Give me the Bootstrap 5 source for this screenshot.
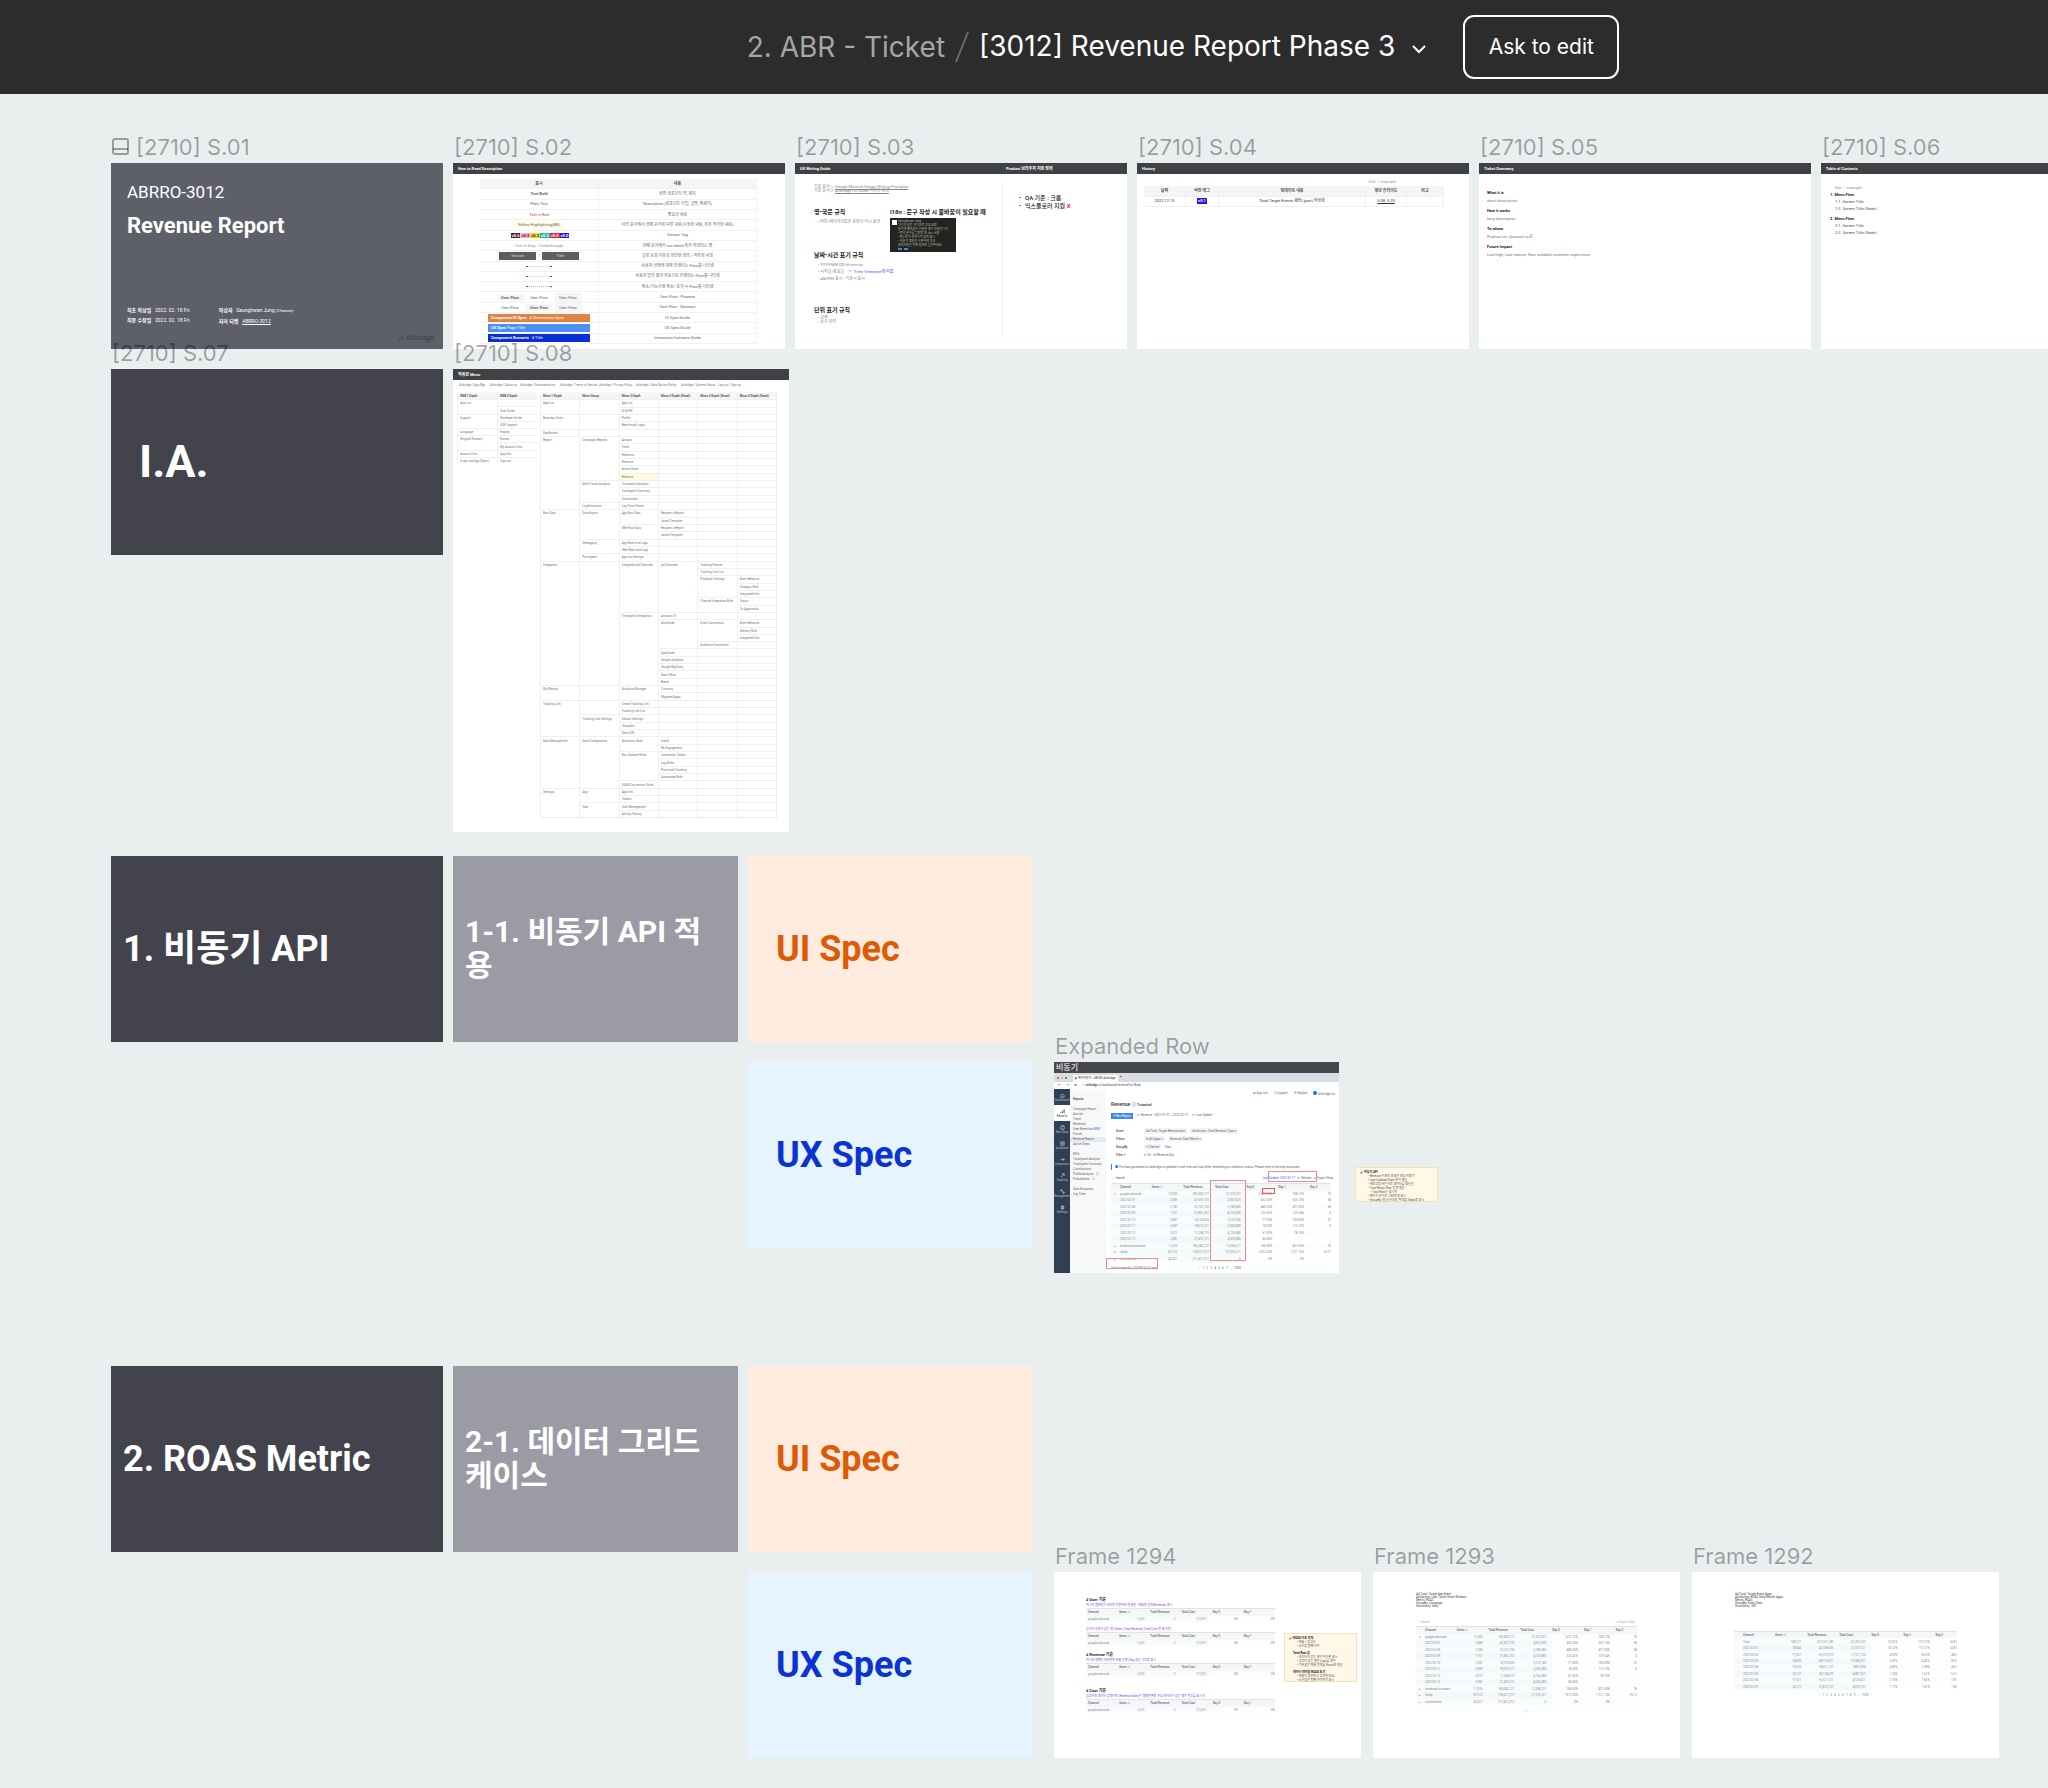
<!DOCTYPE html>
<html lang="ko">
<head>
<meta charset="utf-8">
<meta name="viewport" content="width=device-width, initial-scale=1">
<title>[3012] Revenue Report Phase 3</title>
<link href="https://cdn.jsdelivr.net/npm/bootstrap@5.3.0/dist/css/bootstrap.min.css" rel="stylesheet">
<style>
body{background:#e9efef;font-family:Roboto,"Noto Sans CJK KR",sans-serif;overflow-x:hidden;color:#333}
.topbar{height:94px;background:#2c2c2c;padding-left:318px;font-family:Inter,sans-serif;font-size:28px;color:#fff}
.topbar a{color:#a6a6a6;text-decoration:none}
.topbar h1{font-size:28px;font-weight:400}
.slash{color:#6a6a6a;width:34px}
.menu-btn{background:none;border:0;width:48px;padding:0}
.ask-btn{height:64px;width:156px;margin-left:20px;border:2px solid #fff;border-radius:11px;background:none;color:#fff;font-size:21px;padding:0}
.board{padding:49px 0 29px 111px;overflow:hidden}
.strip{gap:10px}
.gap-top{margin-top:24px}
.gap-group{margin-top:93px}
.fname{height:20px;padding-left:1px;font:400 22px/20px Inter,sans-serif;color:rgba(0,0,0,.34);white-space:nowrap;display:flex;align-items:flex-end;gap:7px;position:relative;z-index:2}
.fname span{line-height:31px;height:31px}
.fname svg{margin-bottom:8px}
.frame{width:332px;height:186px;background:#fff;overflow:hidden;font-size:4px;line-height:7px}
.frame.w-md{width:285px}
.frame.w-lg{width:307px}
.frame.tall{width:336px;height:463px}
.sect{background:#42434c;color:#fff;font-size:36px;line-height:44px;font-weight:700;padding:0 12px}
.sect.inset{padding:0 28px}
.sect.big-t{font-size:45px}
.sub{background:#9b9ba5;color:#fff;font-size:30px;line-height:34px;font-weight:700;padding:0 28px 0 12px;word-break:break-all}
.ui{background:#ffecdf;color:#dd5a06}
.ux{background:#e5f4fe;color:#0b33d2}
.stack{gap:20px}
.side{margin-left:11px}
.side.trio{gap:12px}
.below{padding-top:186px}
.bar{height:11px;background:#404144;color:#fff;font-weight:700;font-size:4px;line-height:11px;padding:0 5px}
p,ul,h2,h3{margin:0}
/* cover */
.cover{background:#5d5f69;color:#fff;padding:19px 9px 7px 16px}
.cover .key{font-size:17px;line-height:20px}
.cover .ttl{font-size:22px;line-height:28px;font-weight:700;margin-top:10px}
.cover .meta{font-size:5px;line-height:10px;margin-top:65px;gap:28px}
.cover .logo{font-size:7px;line-height:8px;color:#3a3c45;margin-top:8px;gap:2px}
.cover a{color:inherit}
/* small tables */
.mini{display:flex;flex-direction:column}
.mini thead,.mini tbody{display:contents}
.mini tr{display:grid;flex:1 1 0;min-height:0}
.mini th,.mini td{display:flex;align-items:center;padding:0;min-width:0;min-height:0;white-space:nowrap;line-height:4px}
.legend{width:277px;height:165px;margin:5px 0 0 27px}
.legend tr{grid-template-columns:119px 158px;border-bottom:1px solid #f1f2f4}
.legend th,.legend td{justify-content:center;border-right:1px solid #f1f2f4;gap:2px}
.legend th,.hist th{background:#f3f5f8;color:#555}
.legend td{color:#666}
.tag{color:#fff;font-size:4px;line-height:5px;padding:0 1px;font-weight:700;margin-right:-2px}
.t1{background:#402a2a}.t2{background:#f6b6d0;color:#702}.t3{background:#f2d72e;color:#430}.t4{background:#2bb5a8}.t5{background:#d82440}.t6{background:#2417e0}
.box{background:#5e5e5e;color:#ddd;width:37px;height:8px;line-height:8px;text-align:center}
.strap{width:102px;height:8px;color:#fff;line-height:8px;padding-left:3px}
.s1{background:#e08243}.s2{background:#4d90f5}.s3{background:#0a2fd6}
.hl{background:#fffde0;padding:1px 4px}
.pill{width:27px;text-align:center;line-height:7px;background:#f5f5f5;font-weight:700}
.arrow{width:26px;border-bottom:1px dotted #ccc;display:flex;justify-content:space-between;line-height:1px;height:1px;color:#555}
.arrow::before,.arrow::after{content:"";width:2px;height:1px;background:currentColor}
.arrow.red{color:#d34;border-color:#e99}
/* writing guide */
.split span:first-child{width:206px}
.guide{height:175px;color:#888}
.guide h3,.guide ul{font-size:6px;line-height:8px;font-weight:700;color:#222}
.guide .g1{width:76px;margin-left:19px;white-space:nowrap}
.guide .g2{width:112px;white-space:nowrap;padding-top:34px}
.guide .g3{border-left:1px solid #eceef0;margin:9px 0 12px;padding:11px 0 0 16px}
.guide .g1 div:nth-child(1){height:34px;padding-top:11px;line-height:4px}
.guide .g1 div:nth-child(2){height:43px}
.guide .g1 div:nth-child(3){height:55px}
.guide .g1 p{padding-left:4px}
.guide .g1 h3{margin-bottom:2px}
.guide .g1 div:nth-child(4) p{line-height:4px}
.guide ul{font-weight:500;padding:0;list-style:none}
.guide li::before{content:"•";display:inline-block;width:6px}
.guide .no{color:#e01b24}
.guide .vio{color:#6a3bff}
.shot{width:66px;height:34px;background:#22241f;color:#b9b9ac;font-size:3px;line-height:4px;padding:1px 2px 1px 8px;overflow:hidden;margin-top:2px;position:relative}
.shot::before{content:"";position:absolute;left:2px;top:2px;width:5px;height:5px;background:#fff}
.shot i{display:inline-block;width:4px;height:2px;background:#2a8fe0;margin-right:2px}
/* history, summary, contents */
.hist{width:300px;height:21px;margin-left:7px}
.hist tr{grid-template-columns:42px 33px 147px 41px 37px}
.hist th,.hist td{justify-content:center;border:0 solid #eef0f2;border-right-width:1px;border-bottom-width:1px}
.hint{line-height:9px;color:#999;padding:3px 73px 0 0;text-align:right;font-size:4px}
.hist .tag{margin-right:0;line-height:6px}
.summ{padding:15px 8px;color:#777}
.summ h3,.toc h3{font-size:4px;line-height:8px;font-weight:700;color:#222}
.summ p{line-height:5px;margin:1px 0 4px}
.toc{padding:10px 9px;color:#444}
.toc p{padding-left:5px;line-height:7px}
.toc h3{line-height:7px}
.toc h3+p+p+h3{margin-top:3px}
/* information architecture */
.crumbs{display:grid;grid-template-columns:31px 30px 40px 39px 37px 45px 37px 1fr;font-size:3px;line-height:11px;padding:0 6px;color:#777;white-space:nowrap}
.ia{font-size:3px;color:#777;gap:3px;padding:1px 0 0 4px}
.ia th{background:#f5f6f8;color:#555}
.ia th,.ia td{padding-left:2px;border-left:1px solid #eff1f1}
.ia .ln{border-top:1px solid #eff1f1}
.ia .mark-y{background:#fffbe0}
.ia-l{width:80px;height:72px}
.ia-l tr{grid-template-columns:1fr 1fr}
.ia-m{width:237px;height:426px;border:solid #eceeee;border-width:0 1px 1px 0}
.ia-m tr{grid-template-columns:repeat(6,1fr)}
/* product screen */
.screen{height:211px;position:relative;font-size:3px;line-height:5px}
.screen .bar{font-size:8px;font-weight:400;padding:0 2px;background:#47484b}
.tabs{height:9px;background:#d9dce0;padding-left:3px;gap:2px}
.dot{width:2px;height:2px;border-radius:50%}
.tab{background:#fff;width:45px;height:7px;line-height:7px;margin:2px 0 0 4px;padding-left:2px}
.url{height:7px;padding:0 4px;line-height:7px;gap:5px;color:#555;background:#fff}
.app-body{height:184px}
.nav1{width:16px;background:#2f4053;color:#aebbc8;font-size:3px}
.nav1 span{height:16px;display:flex;flex-direction:column;align-items:center;justify-content:center;line-height:4px}
.nav1 .on{background:#fff;color:#2f4053}
.nav1 svg{width:5px;height:5px}
.nav2{width:36px;background:#f6f8fa;padding:8px 3px;color:#666;line-height:5px}
.nav2 p{white-space:nowrap}
.nav2 .on{background:#e6eaef;margin:0 -3px;padding:0 3px}
.main{padding:2px 4px 0 5px;flex:1;min-width:0;white-space:nowrap;color:#666}
.main .u{gap:6px;height:6px}
.main .u i{width:4px;height:4px}
.main h2{font-size:5px;line-height:8px;font-weight:500;margin-top:3px;color:#333}
.acts{gap:4px}
.blue{background:#3f86ee;color:#fff;width:22px;height:6px;line-height:6px;text-align:center}
.filt{grid-template-columns:28px 1fr;display:grid;line-height:8px;padding-left:5px}
.chip{background:#f3f5f7;padding:1px 2px;margin-right:3px}
.info{border-left:1px solid #3f86ee;margin:5px 0 6px;padding-left:3px;line-height:6px;height:6px}
.tools{padding:0 2px 2px}
.foot{gap:42px}
.main .grid-t{width:220px}
.grid-t{font-size:3px;color:#8a8a8a;border-top:1px solid #dfe3e6;overflow:hidden}
.grid-t tr{grid-template-columns:9px repeat(6,6fr) 4fr}
.grid-t th{background:#f4f6f8;font-weight:500;color:#666}
.grid-t td{justify-content:flex-end;padding-right:6px}
.grid-t td:nth-child(2){justify-content:flex-start}
.grid-t td:nth-child(-n+5){background:#f4f9fb}
.grid-t tr:nth-child(odd) td:nth-child(-n+5){background:#f9fcfd}
.grid-t tr:nth-child(odd) td{background:#fcfdfd}
.grid-t td:last-child{padding-right:0}
.grid-t td:nth-child(1){padding-right:4px}
.h11{height:79px}
.pager{font-size:3px;line-height:6px;color:#888;text-align:center}
.redbox{position:absolute;border:1px solid #f28b8b}
.rb1{left:214px;top:109px;width:49px;height:11px}
.rb2{left:156px;top:118px;width:36px;height:81px}
.rb3{left:52px;top:196px;width:52px;height:11px}
.rb4{left:208px;top:126px;width:13px;height:6px;border-color:#e55}
.sticky-n{background:#fff8e6;border:1px solid #f8e2b4;font-size:3px;line-height:4px;color:#555;padding:2px 3px 2px 12px;white-space:nowrap;position:relative}
.sticky-n::before{content:"";position:absolute;left:4px;top:4px;width:3px;height:1px;background:#d8343f;transform:rotate(-35deg)}
.sticky-n b{display:block;margin-left:-4px;color:#222}
.note-a{width:83px;height:35px;margin:125px 0 0 16px}
.note-b{width:73px;height:49px;margin:61px 0 0 9px}
.note-b b{margin-top:3px}
.note-b b:first-child{margin-top:0}
.cases{width:189px;margin:25px 0 0 32px}
.cases h3{font-size:4px;line-height:5px;font-weight:700;color:#222}
.cases h3::first-letter{color:#6a2bff}
.cases p{color:#8a3ff0;font-size:3px;line-height:6px;white-space:nowrap}
.cases .grid-t{height:14px;margin-bottom:4px}
.cases .grid-t tr{grid-template-columns:2px repeat(6,1fr)}
.cases .grid-t + h3{margin-top:6px}
.cases .grid-t + .last{margin-top:11px}
.cond{font-size:3px;line-height:3px;color:#444;padding:21px 0 0 43px}
.find{font-size:3px;line-height:4px;color:#aaa;margin:12px 45px 2px 45px}
.inner-t{margin:0 43px}
.t1292{height:59px;margin:23px 42px 2px}
</style>
<script src="https://cdn.jsdelivr.net/npm/bootstrap@5.3.0/dist/js/bootstrap.bundle.min.js"></script>
</head>
<body>
<header class="topbar d-flex align-items-center justify-content-center text-nowrap">
  <a href="#">2. ABR - Ticket</a>
  <svg class="slash" width="34" height="32" viewBox="0 0 34 32" fill="none" stroke="currentColor" stroke-width="2"><path d="M23 1 11 31"/></svg>
  <h1 class="m-0">[3012] Revenue Report Phase 3</h1>
  <button class="menu-btn" type="button" aria-label="File menu"><svg width="14" height="10" viewBox="0 0 14 10" fill="none" stroke="#fff" stroke-width="2"><path d="m1 2 6 6 6-6"/></svg></button>
  <button class="ask-btn" type="button">Ask to edit</button>
</header>

<main class="board">
  <div class="strip d-flex">
    <section class="flex-shrink-0">
      <div class="fname"><svg width="17" height="17" viewBox="0 0 17 17" fill="none" stroke="currentColor" stroke-width="2"><rect x="1" y="1" width="15" height="15" rx="2"/><path d="M1 11h15"/></svg><span>[2710] S.01</span></div>
      <div class="frame cover">
        <p class="key">ABRRO-3012</p>
        <h2 class="ttl">Revenue Report</h2>
        <div class="meta d-flex">
          <div><b>최초 작성일</b> &nbsp; 2022. 02. 18 Fri.<br><b>최종 수정일</b> &nbsp; 2022. 02. 18 Fri.</div>
          <div><b>작성자</b> &nbsp; Seunghwan Jung <small>(Chance)</small><br><b>지라 티켓</b> &nbsp; <a href="#">ABRRO-3012</a></div>
        </div>
        <div class="logo d-flex justify-content-end align-items-center"><svg width="5" height="5" viewBox="0 0 10 10" fill="none" stroke="currentColor"><path d="M1 9V4h5M4 7h5M4 1h5v4"/></svg>Airbridge</div>
      </div>
    </section>
    <section class="flex-shrink-0">
      <div class="fname"><span>[2710] S.02</span></div>
      <div class="frame">
        <div class="bar">How to Read Description</div>
        <table class="mini legend">
          <thead><tr><th>표시</th><th>내용</th></tr></thead>
          <tbody>
          <tr><td><b>Text Bold</b></td><td>화면 컴포넌트 명, 제목</td></tr>
          <tr><td>Plain Text</td><td>Description (컴포넌트 타입, 설명, 메세지)</td></tr>
          <tr><td class="text-danger">Text in Red</td><td>중요한 내용</td></tr>
          <tr><td><span class="hl">Yellow Highlighting(BG)</span></td><td>이전 문서에서 현재 문서의 다른 내용(수정된 내용, 혹은 추가된 내용)</td></tr>
          <tr><td><span class="tag t1">v0.6</span><span class="tag t2">v0.2</span><span class="tag t3">v0.3</span><span class="tag t4">v0.2</span><span class="tag t5">v0.0</span><span class="tag t6">v0.0</span></td><td>Version Tag</td></tr>
          <tr><td class="text-black-50">Text in Gray / Strikethrough</td><td>현재 문서에서 out dated 혹은 작성되는 중</td></tr>
          <tr><td><span class="box">Service</span> / <span class="box">Title</span></td><td>일정 등의 이유로 확인된 항목 / 미확정 사항</td></tr>
          <tr><td><span class="arrow"></span></td><td>사용자 선택에 의해 진행되는 Flow를 나타냄</td></tr>
          <tr><td><span class="arrow"></span></td><td>사용자 입력 없이 자동으로 진행되는 Flow를 나타냄</td></tr>
          <tr><td><span class="arrow red"></span></td><td>취소/기능수행 취소/ 조치 시 Flow를 나타냄</td></tr>
          <tr><td><span class="pill">User Flow</span><span class="pill bg-white fw-normal">User Flow</span><span class="pill hl fw-normal">User Flow</span></td><td>User Flow - Process</td></tr>
          <tr><td><span class="pill bg-white fw-normal">User Flow</span><span class="pill">User Flow</span><span class="pill hl fw-normal">User Flow</span></td><td>User Flow - Decision</td></tr>
          <tr><td><span class="strap s1"><b>Component UI Spec</b> &nbsp; A Dimensions Sync</span></td><td>UI Spec Guide</td></tr>
          <tr><td><span class="strap s2"><b>UX Spec</b> Page Title</span></td><td>UX Spec Guide</td></tr>
          <tr><td><span class="strap s3"><b>Component Scenario</b> &nbsp; # Title</span></td><td>Interaction Scenario Guide</td></tr>
          </tbody>
        </table>
      </div>
    </section>
    <section class="flex-shrink-0">
      <div class="fname"><span>[2710] S.03</span></div>
      <div class="frame">
        <div class="bar split d-flex"><span>UX Writing Guide</span><span>Product 브라우저 지원 범위</span></div>
        <div class="guide d-flex">
          <div class="g1">
            <div>기준 문서 1: <u>Google Material Design Writing Principles</u><br>기준 문서 2: <u>Airbridge UX Guide 가이드 정리</u></div>
            <div><h3>영•국문 규칙</h3><p>• 버튼/페이지이름은 문장이 아닌 표현</p></div>
            <div><h3>날짜•시간 표기 규칙</h3><p>• YYYY-MM-DD hh:mm:ss</p><p>• 시작일/종료일 &nbsp; → &nbsp; <span class="vio">Time Timezone에 따름</span></p><p>• AM/PM 표시 - 기준시 표시</p></div>
            <div><h3>단위 표기 규칙</h3><p>• 금액</p><p>• 소수 단위</p></div>
          </div>
          <div class="g2">
            <h3>i18n : 문구 작성 시 줄바꿈이 필요할 때</h3>
            <div class="shot">Seunghwan Jung<br>다음과 같은 규칙으로 작성 요청<br>문구에 줄바꿈이 필요한 경우 사용합니다<br>• 번역 문구를 입력할 때 &lt;br&gt; 사용<br>• 텍스트가 끊어지지 않게 표시<br>• 국문과 영문을 구분하여 작성<br>문의사항은 아래 링크로 남겨주세요<br><i></i><i></i></div>
          </div>
          <div class="g3"><ul><li>QA 기준 : 크롬</li><li>익스플로러 지원 <b class="no">X</b></li></ul></div>
        </div>
      </div>
    </section>
    <section class="flex-shrink-0">
      <div class="fname"><span>[2710] S.04</span></div>
      <div class="frame">
        <div class="bar">History</div>
        <p class="hint">Edit <span class="text-warning">✎</span> example</p>
        <table class="mini hist">
          <thead><tr><th>날짜</th><th>버전 태그</th><th>업데이트 내용</th><th>해당 슬라이드</th><th>비고</th></tr></thead>
          <tbody><tr><td>2022.12.15</td><td><span class="tag t6">v0.1</span></td><td>Total Target Events 제안(.json) 작성함</td><td><u>S.08, S.20</u></td><td></td></tr></tbody>
        </table>
      </div>
    </section>
    <section class="flex-shrink-0">
      <div class="fname"><span>[2710] S.05</span></div>
      <div class="frame">
        <div class="bar">Ticket Summary</div>
        <div class="summ">
          <h3>What it is</h3><p>short description</p>
          <h3>How it works</h3><p>long description</p>
          <h3>To whom</h3><p>Product tier, Account xx원</p>
          <h3>Future Impact</h3><p>Low-high, Last feature; New scalable customer experience</p>
        </div>
      </div>
    </section>
    <section class="flex-shrink-0">
      <div class="fname"><span>[2710] S.06</span></div>
      <div class="frame">
        <div class="bar">Table of Contents</div>
        <div class="toc">
          <p class="text-black-50">Edit <span class="text-warning">✎</span> example</p>
          <h3>1. Menu Flow</h3><p>1-1. Screen Title</p><p>1-2. Screen Title (State)</p>
          <h3>2. Menu Flow</h3><p>2-1. Screen Title</p><p>2-2. Screen Title (State)</p>
        </div>
      </div>
    </section>
  </div>

  <div class="strip d-flex">
    <section class="flex-shrink-0">
      <div class="fname"><span>[2710] S.07</span></div>
      <div class="frame sect inset big-t d-flex align-items-center">I.A.</div>
    </section>
    <section class="flex-shrink-0">
      <div class="fname"><span>[2710] S.08</span></div>
      <div class="frame tall">
        <div class="bar">작동된 Menu</div>
        <div class="crumbs"><span>Airbridge / App Mgr</span><span>Airbridge / About us</span><span>Airbridge / Documentation</span><span>Airbridge / Terms of Service</span><span>Airbridge / Privacy Policy</span><span>Airbridge / Data Opt-out Policy</span><span>Airbridge / System Status</span><span>Log out / Sign up</span></div>
        <div class="ia d-flex"><table class="mini ia-l" id="iaUtility"></table><table class="mini ia-m" id="iaMenu"></table></div>
      </div>
    </section>
  </div>

  <div class="strip d-flex gap-top">
    <div class="frame sect d-flex align-items-center flex-shrink-0">1. 비동기 API</div>
    <div class="frame w-md sub d-flex align-items-center flex-shrink-0">1-1. 비동기 API 적용</div>
    <div class="stack d-flex flex-column flex-shrink-0">
      <div class="frame w-md sect inset ui d-flex align-items-center">UI Spec</div>
      <div class="frame w-md sect inset ux d-flex align-items-center">UX Spec</div>
    </div>
    <div class="side below d-flex flex-shrink-0">
      <section>
        <div class="fname"><span>Expanded Row</span></div>
        <div class="frame w-md screen">
          <div class="bar">비동기</div>
          <div class="tabs d-flex align-items-center"><i class="dot bg-danger"></i><i class="dot bg-warning"></i><i class="dot bg-success"></i><span class="tab">▮ 에어브릿지 - AB180 Airbridge &nbsp; ×</span>+</div>
          <div class="url d-flex"><span>←</span><span>→</span><span>⟳</span><span>ⓘ <b>airbridge</b>.io/dashboard/revenue?x=1&amp;tab</span></div>
          <div class="app-body d-flex">
            <nav class="nav1" id="nav1"></nav>
            <div class="nav2"><p class="fw-bold">Reports</p><p>&nbsp;</p><p>Campaign Report</p><p>Actuals</p><p>Trend</p><p>Retention</p><p>User Retention <span class="text-primary">NEW</span></p><p>Funnel</p><p class="on">Revenue Report</p><p>Active Users</p><p>&nbsp;</p><p>MTA</p><p>Touchpoint Analysis</p><p>Touchpoint Summary</p><p>Contributions</p><p>Profile Analysis &nbsp; ☐</p><p>Probabilistic &nbsp; ☐</p><p>&nbsp;</p><p>Data Extraction</p><p>Log Time</p></div>
            <div class="main">
              <div class="u d-flex justify-content-end"><span>⊞ App List</span><span>☐ Support</span><span>⊕ English</span><span><i class="d-inline-block bg-primary rounded-1"></i> Airbridge Inc</span></div>
              <h2>Revenue <small>ⓘ Tutorial</small></h2>
              <div class="acts d-flex mt-1 mb-2"><span class="blue">+ New Report</span><span>⊡ Revenue - 2021-01-01 ~ 2022-02-17</span><span>⟳ Last Update</span></div>
              <div class="filt"><b>Event</b><span><span class="chip">Ad Total: Target Revenue Amt</span><span class="chip">Attribution: Total Revenue Type ×</span></span></div>
              <div class="filt"><b>Filters</b><span><span class="chip">In-All Apps ×</span><span class="chip">Revenue: Date/Month ×</span></span></div>
              <div class="filt"><b>GroupBy</b><span><span class="chip">+ Channel</span><span class="text-primary">Clear</span></span></div>
              <div class="filt"><b>Filter +</b><span>in 7d - 2d Revenue Day</span></div>
              <div class="info"><span class="text-primary">●</span> The data generated on Airbridge is updated in real time and may differ depending on collection status. Please refer to the help document.</div>
              <div class="tools d-flex justify-content-between"><span>⌕ Search</span><span><span class="text-primary">Last Update: 2022-02-17</span> &nbsp; ⟳ Refresh &nbsp; ⊡ Export Data</span></div>
              <table class="mini grid-t h11" data-kind="full"></table>
              <div class="foot d-flex pt-1"><span>Total of results: 110,000 (0.12 sec)</span><span>‹ &nbsp; 1 &nbsp; 2 &nbsp; 3 &nbsp; 4 &nbsp; 5 &nbsp; 6 &nbsp; 7 &nbsp; … &nbsp; 1000 &nbsp; ›</span></div>
            </div>
          </div>
          <i class="redbox rb1"></i><i class="redbox rb2"></i><i class="redbox rb3"></i><i class="redbox rb4"></i>
        </div>
      </section>
      <div class="sticky-n note-a"><b>비동기 API</b>• Revenue 리포트 요청은 항상 비동기<br>• Last Updated Date 문구 제공<br>• 새로고침 버튼으로 데이터를 갱신함<br>• Total Rows: Row 합계 제공<br>&nbsp; &nbsp;• Total Row는 표시됨<br>• 페이지 사이즈: 100개 행 표시<br>• GroupBy: 행 순서대로, 최대값 Steps로 표시</div>
    </div>
  </div>

  <div class="strip d-flex gap-group">
    <div class="frame sect d-flex align-items-center flex-shrink-0">2. ROAS Metric</div>
    <div class="frame w-md sub d-flex align-items-center flex-shrink-0">2-1. 데이터 그리드 케이스</div>
    <div class="stack d-flex flex-column flex-shrink-0">
      <div class="frame w-md sect inset ui d-flex align-items-center">UI Spec</div>
      <div class="frame w-md sect inset ux d-flex align-items-center">UX Spec</div>
    </div>
    <div class="side trio below d-flex flex-shrink-0">
      <section>
        <div class="fname"><span>Frame 1294</span></div>
        <div class="frame w-lg d-flex align-items-start">
          <div class="cases flex-shrink-0">
            <h3># User 기준</h3><p>하나의 캠페인이 여러번 방문하여 발생한 - 매출의 합계(Revenue) 표시</p>
            <table class="mini grid-t" data-kind="case"></table>
            <p>광고비 설정이 없는 행 (Users, Total Revenue, Total Cost 만 표기됨)</p>
            <table class="mini grid-t" data-kind="case"></table>
            <h3># Revenue 기준</h3><p>하나의 캠페인 여러번의 매출 합계 (Day X)는 그대로 표시</p>
            <table class="mini grid-t" data-kind="case"></table>
            <h3 class="last"># Cost 기준</h3><p>광고비용 데이터 업데이트 (Revenue Date)는 캠페인별로 구성 데이터가 없는 경우 일부를 표시함</p>
            <table class="mini grid-t" data-kind="case"></table>
          </div>
          <div class="sticky-n note-b flex-shrink-0"><b>ROAS 지표 정의</b>• 매출 / 광고비<br>• 소수점 둘째 자리<br><b>Total Row 값</b>• 데이터가 없는 경우 하이픈 표시<br>• 광고비 없는 행은 Cost를 제외<br>• 기본값은 매출 합계를 Rows에 제공<br><b>데이터 테이블 ROAS 표기</b>• 매출이 없으면 0, 없으면 N/A<br>• 소수점은 둘째 자리까지 표시</div>
        </div>
      </section>
      <section>
        <div class="fname"><span>Frame 1293</span></div>
        <div class="frame w-lg">
          <div class="cond">Ad Total: Target App Event<br>Attribution: Last Touch/Event Window<br>Metric: ROAS<br>GroupBy: Campaign<br>Granularity: Daily</div>
          <div class="find d-flex justify-content-between"><span>⌕ Search</span><span>⊡ Export Data</span></div>
          <div class="inner-t"><table class="mini grid-t h11" data-kind="full"></table></div>
          <p class="pager pt-1">‹ &nbsp; 1 &nbsp; ›</p>
        </div>
      </section>
      <section>
        <div class="fname"><span>Frame 1292</span></div>
        <div class="frame w-lg">
          <div class="cond">Ad Total: Target Event Apps<br>Attribution: ROAS Daily/Month Apps<br>Metric: ROAS<br>GroupBy: Event Date<br>Granularity: 180</div>
          <table class="mini grid-t t1292" data-kind="daily"></table>
          <p class="pager">‹ &nbsp; 1 &nbsp; 2 &nbsp; 3 &nbsp; 4 &nbsp; 5 &nbsp; 6 &nbsp; 7 &nbsp; 8 &nbsp; 9 &nbsp; … &nbsp; 1000 &nbsp; ›</p>
        </div>
      </section>
    </div>
  </div>
</main>

<script>
// Site map: one line per row, columns split by "|"
const menuRows = `App List||App List
||ID & PW
Business Units||Profile
||Benchmark Login
Dashboard
Report|Campaign Reports|Actuals
||Trend
||Retention
||Revenue
||Active Users
||*Revenue
|Multi-Touch Analysis|Touchpoint Analysis
||Touchpoint Summary
||Contribution
|Log Extraction|Log Time Viewer
Raw Data|Data Export|App Raw Data|Request a Report
|||Saved Template
||Web Raw Data|Request a Report
|||Saved Template
|Debugging|App Real-time Logs
||Web Real-time Logs
|Participate|App Ins Settings
Integration||Integrated Ad Channels|Ad Channels|Tracking Partner
||||Tracking Link List
||||Postback Settings|Event Behavior
|||||Category Rule
|||||Integrated Info
||||Channel Integration Rule|Status
|||||To Appsworks
||Third-party Integration|Amazon S3
|||Amplitude|Event Connection|Event Behavior
|||||Delivery Rule
|||||Integrated Info
||||Audience Connection
|||Amplitude
|||Google Analytics
|||Google BigQuery
|||Data Office
|||Braze
My Metrics||Analytics Manager|Currency
|||Migrated Apps
Tracking Link||Create Tracking Link
||Tracking Link List
|Tracking Link Settings|Default Settings
||Template
||Short URL
Data Management|Data Configuration|Attribution Rule|Install
|||Re-Engagement
||Raw Dataset Rules|Conversion Tables
|||Log Rules
|||Prioritized Tracking
|||Automated Rule
||SKAN Conversion Value
Settings|App|App Info
||Tokens
|User|User Management
||Activity History`;
const utilRows = `App List
|User Guide
Support|Developer Guide
|SDK Support
Language|English
(English/Korean)|Korean
|My Account Info
Account Info|App Info
(Logo and App Mgmt)|Sign out`;

function siteTable(id, heads, text) {
  const body = text.split('\n').map(line => {
    const cells = line.split('|');
    const first = cells.findIndex(c => c);
    return '<tr>' + heads.map((_, i) => {
      const c = cells[i] || '';
      const cls = (i >= first ? 'ln' : '') + (c[0] === '*' ? ' mark-y' : '');
      return `<td class="${cls}">${c.replace('*', '').replace('&', '&amp;')}</td>`;
    }).join('') + '</tr>';
  }).join('');
  document.getElementById(id).innerHTML =
    '<thead><tr>' + heads.map(h => `<th>${h}</th>`).join('') + '</tr></thead><tbody>' + body + '</tbody>';
}
siteTable('iaUtility', ['GNB 1 Depth', 'GNB 2 Depth'], utilRows);
siteTable('iaMenu', ['Menu 1 Depth', 'Menu Group', 'Menu 2 Depth', 'Menu 3 Depth (Detail)', 'Menu 4 Depth (Detail)', 'Menu 5 Depth (Detail)'], menuRows);

// Report grids
const heads = ['', 'Channel', 'Users ↓', 'Total Revenue', 'Total Cost', 'Day 0', 'Day 1', 'Day 2'];
const kinds = {
  full: [
    ['▾','google.adwords','12,050','182,500,121','21,510,201','1,651.21%','758.12%','70'],
    ['','2022-02-07','2,085','41,057,125','4,057,025','452.30%','620.10%','68'],
    ['','2022-02-08','2,182','25,125,100','3,185,085','480.25%','471.05%','68'],
    ['','2022-02-09','1,751','31,851,252','4,125,085','326.41%','129.54%','4'],
    ['','2022-02-10','2,087','18,125,026','3,210,180','77.05%','105.05%','51'],
    ['','2022-02-11','2,087','18,510,121','3,205,080','78.05%','115.10%','8'],
    ['','2022-02-12','2,512','11,258,210','4,126,080','61.52%','78.10%',''],
    ['','2022-02-13','2,081','21,475,121','4,025,080','80.45%','',''],
    ['▸','facebook.business','11,025','185,042,127','12,058,217','186.05%','421.60%','76'],
    ['▸','tiktok','87,212','178,221,317','21,015,211','1,812.05%','1,221.10%','76.12'],
    ['▸','unattributed','42,021','211,421,012','0','0%','0%','']],
  daily: [
    ['','Total','108,121','521,251,180','41,205,102','15.01%','117.21%','14.81'],
    ['','2022-02-01','18,045','42,108,035','12,107,121','18.12%','110.12%','14.81'],
    ['','2022-02-02','17,027','51,077,010','11,101,120','4.09%','8.02%','4.81'],
    ['','2022-02-03','14,085','28,175,021','10,186,201','6.07%','4.40%','8.02'],
    ['','2022-02-04','15,026','18,521,127','7,801,094','4.82%','1.68%','4.01'],
    ['','2022-02-05','10,127','18,128,079','4,081,321','1.14%','1.61%','6.21'],
    ['','2022-02-06','17,021','16,121,121','4,126,021','1.76%','1.82%','1.81'],
    ['','2022-02-07','14,121','12,810,127','4,010,121','1.17%','1.81%','1.80']],
  case: [['','google.adwords','1,020','0','112,021','0%','0%']]
};
document.querySelectorAll('[data-kind]').forEach(t => {
  const rows = kinds[t.dataset.kind];
  t.innerHTML = '<thead><tr>' + heads.slice(0, rows[0].length).map(h => `<th>${h}</th>`).join('') + '</tr></thead><tbody>' +
    rows.map(r => '<tr>' + r.map(c => `<td>${c}</td>`).join('') + '</tr>').join('') + '</tbody>';
});

// Product navigation
const icons = {
  Dashboard:'M2 6 6 2l4 4v4H2z', Reports:'M2 10V7M6 10V4M10 10V1', 'Raw Data':'M2 3h8v7H2zM4 1h4', Audience:'M2 2h8v8H2zM4 6h4',
  Integration:'M2 6h8M7 3l3 3-3 3', Tracking:'M2 10 10 2M5 2h5v5', Management:'M2 2h3v3H2zM7 7h3v3H7z', Settings:'M3 3h6v6H3zM6 1v10'
};
document.getElementById('nav1').innerHTML = Object.entries(icons).map(([n, d]) =>
  `<span class="${n === 'Reports' ? 'on' : ''}"><svg viewBox="0 0 12 12" fill="none" stroke="currentColor" stroke-width="2"><path d="${d}"/></svg>${n}</span>`).join('');
</script>
</body>
</html>
